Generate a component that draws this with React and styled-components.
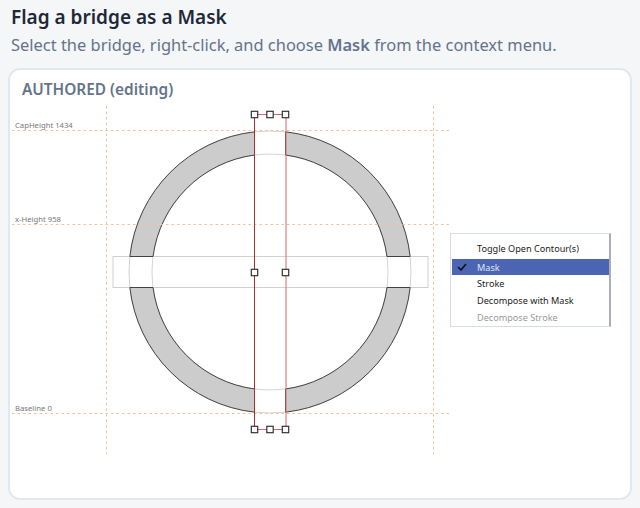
import React from "react";
import styled, { createGlobalStyle } from "styled-components";

const Global = createGlobalStyle`
  html, body { margin: 0; padding: 0; background: #f4f6f8; }
  body { font-family: "Noto Sans", "Open Sans", "Liberation Sans", sans-serif; }
`;

const Page = styled.div`
  width: 640px;
  height: 508px;
  box-sizing: border-box;
  padding: 5px 8px 8px;
  display: flex;
  flex-direction: column;
  overflow: hidden;
`;
const Heading = styled.h1`
  margin: 0 0 0 3px;
  font-size: 19px;
  line-height: 24px;
  font-weight: 600;
  color: #1f2937;
`;
const Lead = styled.p`
  margin: 4px 0 0 3px;
  font-size: 16.45px;
  line-height: 24px;
  color: #64748b;
  white-space: nowrap;
  b { font-weight: 600; }
`;
const Card = styled.section`
  position: relative;
  margin-top: 11px;
  flex: 1;
  box-sizing: border-box;
  background: #fff;
  border: 2px solid #e2e8f0;
  border-radius: 12px;
`;
const CardTitle = styled.h2`
  margin: 0;
  padding: 9px 0 0 12px;
  height: 30px;
  box-sizing: border-box;
  font-size: 15.4px;
  line-height: 22px;
  font-weight: 600;
  color: #64748b;
`;
const Canvas = styled.svg`
  display: block;
  width: 620px;
  height: 395px;
`;
const GuideLabel = styled.text`
  font-family: "Noto Sans", sans-serif;
  font-size: 7.7px;
  fill: #777;
`;
const Menu = styled.ul`
  position: absolute;
  left: 440px;
  top: 163px;
  width: 161px;
  height: 94px;
  box-sizing: border-box;
  margin: 0;
  padding: 6px 0 0 1px;
  display: flex;
  flex-direction: column;
  list-style: none;
  background: #fff;
  border: 1px solid #d5dcea;
  border-right: 2px solid #a9aeb8;
  font-size: 9.15px;
`;
const MenuItem = styled.li`
  display: flex;
  align-items: center;
  height: 16px;
  margin-top: ${(p) => p.$gap || 0}px;
  color: ${(p) => (p.$disabled ? "#9a9a9a" : p.$active ? "#dfe4f5" : "#222")};
  background: ${(p) => (p.$active ? "#4c64b4" : "transparent")};
`;
const CheckSlot = styled.span`
  width: 25px;
  flex: none;
  display: flex;
  justify-content: center;
  padding-right: 5px;
  box-sizing: border-box;
`;
const Check = styled.svg`
  width: 10px;
  height: 8px;
`;

const CX = 270, CY = 272, RO = 141, RI = 118;
const XL = 254.5, XR = 285.5, YT = 256.5, YB = 287.5;

function segment(sx, sy) {
  const vx = sx > 0 ? XR : XL;
  const hy = sy > 0 ? YB : YT;
  const dxv = Math.abs(vx - CX), dyh = Math.abs(hy - CY);
  const oV = [vx, CY + sy * Math.sqrt(RO * RO - dxv * dxv)];
  const oH = [CX + sx * Math.sqrt(RO * RO - dyh * dyh), hy];
  const iH = [CX + sx * Math.sqrt(RI * RI - dyh * dyh), hy];
  const iV = [vx, CY + sy * Math.sqrt(RI * RI - dxv * dxv)];
  const sweepOut = sx * sy < 0 ? 1 : 0;
  const sweepIn = 1 - sweepOut;
  return `M${oV} A${RO} ${RO} 0 0 ${sweepOut} ${oH} L${iH} A${RI} ${RI} 0 0 ${sweepIn} ${iV} Z`;
}

const GUIDE = { stroke: "#f8c096", strokeWidth: 1, strokeDasharray: "2.5 3" };
const handles = [
  [254.5, 114.5], [270, 114.5], [285.5, 114.5],
  [254.5, 272.5], [285.5, 272.5],
  [254.5, 429.5], [270, 429.5], [285.5, 429.5],
];

export default function App() {
  return (
    <Page>
      <Global />
      <Heading>Flag a bridge as a Mask</Heading>
      <Lead>Select the bridge, right-click, and choose <b>Mask</b> from the context menu.</Lead>
      <Card>
        <CardTitle>AUTHORED (editing)</CardTitle>
        <Canvas viewBox="10 100 620 395">
          <circle cx={CX} cy={CY} r={RO} fill="none" stroke="#d4d4d4" />
          <circle cx={CX} cy={CY} r={RI} fill="none" stroke="#d4d4d4" />
          <rect x="113" y={YT} width="315" height={YB - YT} fill="none" stroke="#d0d0d0" />
          {[[-1, -1], [1, -1], [-1, 1], [1, 1]].map(([a, b]) => (
            <path key={`${a}${b}`} d={segment(a, b)} fill="#cccccc" stroke="#333" strokeWidth="0.9" />
          ))}
          <line x1="106.5" y1="106" x2="106.5" y2="454" {...GUIDE} />
          <line x1="433.5" y1="106" x2="433.5" y2="454" {...GUIDE} />
          <line x1="12" y1="130.5" x2="450" y2="130.5" {...GUIDE} />
          <line x1="12" y1="224.5" x2="450" y2="224.5" {...GUIDE} />
          <line x1="12" y1="413.5" x2="450" y2="413.5" {...GUIDE} />
          <GuideLabel x="15" y="128">CapHeight 1434</GuideLabel>
          <GuideLabel x="15" y="222">x-Height 958</GuideLabel>
          <GuideLabel x="15" y="411">Baseline 0</GuideLabel>
          <line x1="254.5" y1="114" x2="254.5" y2="430" stroke="#b5282c" />
          <line x1="286" y1="114" x2="286" y2="430" stroke="#d9686c" />
          <line x1="254" y1="114.5" x2="286" y2="114.5" stroke="#d0666a" />
          <line x1="254" y1="429.5" x2="286" y2="429.5" stroke="#d0666a" />
          {handles.map(([x, y]) => (
            <rect key={`${x}-${y}`} x={x - 3.2} y={y - 3.2} width="6.4" height="6.4" fill="#fff" stroke="#333" strokeWidth="1.2" />
          ))}
        </Canvas>
        <Menu>
          <MenuItem><CheckSlot />Toggle Open Contour(s)</MenuItem>
          <MenuItem $gap={3} $active>
            <CheckSlot><Check viewBox="0 0 10 8"><path d="M1 4l3 3 5-6" fill="none" stroke="#111" strokeWidth="1.6" /></Check></CheckSlot>
            Mask
          </MenuItem>
          <MenuItem><CheckSlot />Stroke</MenuItem>
          <MenuItem $gap={1}><CheckSlot />Decompose with Mask</MenuItem>
          <MenuItem $gap={1} $disabled><CheckSlot />Decompose Stroke</MenuItem>
        </Menu>
      </Card>
    </Page>
  );
}
